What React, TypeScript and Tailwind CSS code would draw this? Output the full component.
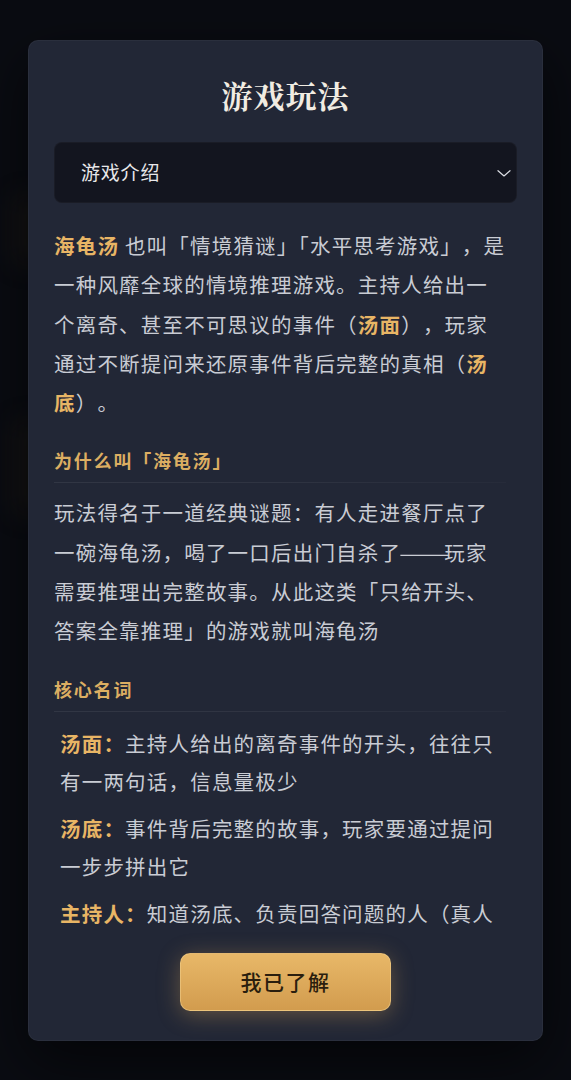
import React from 'react';

const sans = { fontFamily: '"Noto Sans CJK SC", "Noto Sans", sans-serif' };
const serif = { fontFamily: '"Noto Serif CJK SC", "Source Han Serif SC", "Noto Sans CJK SC", serif' };

interface Term {
  label: string;
  text: string;
}

const terms: Term[] = [
  { label: '汤面：', text: '主持人给出的离奇事件的开头，往往只有一两句话，信息量极少' },
  { label: '汤底：', text: '事件背后完整的故事，玩家要通过提问一步步拼出它' },
  { label: '主持人：', text: '知道汤底、负责回答问题的人（真人或 AI），只能回答“是”“不是”或“无关”' },
];

const Gold = ({ children }: { children: React.ReactNode }) => (
  <b className="font-bold text-[#e8b565]">{children}</b>
);

// adjacent brackets get collapsed like the reference does
const Pair = ({ children }: { children: React.ReactNode }) => (
  <span className="[text-spacing-trim:normal]">{children}</span>
);

const Section = ({ title, children }: { title: string; children: React.ReactNode }) => (
  <div className="mt-[24px]">
    <h3 className="text-[18px] leading-[28px] font-bold tracking-[1.8px] text-[#dcae62]">{title}</h3>
    <div className="mt-[8px] h-px w-full bg-gradient-to-r from-white/[0.07] via-white/[0.06] to-white/[0.02]" />
    {children}
  </div>
);

export default function App() {
  return (
    <div className="relative min-h-[1080px] w-full overflow-hidden bg-[#0a0c12]" style={sans}>
      {/* faint page content behind the dialog */}
      <div className="absolute left-[12px] top-[195px] h-[70px] w-[36px] rounded-lg bg-[#3a2e18]/20 blur-md" />
      <div className="absolute left-[12px] top-[420px] h-[95px] w-[36px] rounded-lg bg-[#3a2e18]/20 blur-md" />

      <div className="relative px-[28px] pt-[40px]">
        <div className="flex h-[1001px] flex-col rounded-[10px] border border-white/[0.04] bg-[#222736] px-[25px] pt-[30px] shadow-[0_20px_60px_rgba(0,0,0,0.6)]">
          <h2 className="text-center text-[31px] font-bold leading-[48px] tracking-[1px] text-[#f1ece2]" style={serif}>
            游戏玩法
          </h2>

          <div className="mt-[23px] flex h-[61px] items-center justify-between rounded-[8px] border border-white/[0.03] bg-[#13151f] pl-[26px] pr-[3px]">
            <span className="text-[19px] tracking-[0.8px] text-[#e8e8ea]">游戏介绍</span>
            <svg width="18" height="18" viewBox="0 0 24 24" fill="none" stroke="#dcdee4" strokeWidth="1.6" strokeLinecap="round" strokeLinejoin="round">
              <path d="M4 9l8 7 8-7" />
            </svg>
          </div>

          <div className="mt-[23px] h-[710px] overflow-hidden pr-[11px] text-[20.5px] leading-[39.3px] tracking-[1.2px] text-[#c9ccd4] [text-spacing-trim:space-all]">
            <p>
              <Gold>海龟汤</Gold> 也叫「情境猜谜<Pair>」「</Pair>水平思考游戏」，是一种风靡全球的情境推理游戏。主持人给出一个离奇、甚至不可思议的事件（<Gold>汤面</Gold>），玩家通过不断提问来还原事件背后完整的真相（<Gold>汤底</Gold>）。
            </p>

            <Section title="为什么叫「海龟汤」">
              <p className="mt-[10px]">
                玩法得名于一道经典谜题：有人走进餐厅点了一碗海龟汤，喝了一口后出门自杀了
                <span className="inline-block w-[43px] text-center">
                  <span className="inline-block scale-x-[1.5] tracking-[-2px]">——</span>
                </span>
                玩家需要推理出完整故事。从此这类「只给开头、答案全靠推理」的游戏就叫海龟汤
              </p>
            </Section>

            <Section title="核心名词">
              <ul className="mt-[12px] flex flex-col gap-[9px] pl-[6px] leading-[38px]">
                {terms.map((t) => (
                  <li key={t.label}>
                    <Gold>{t.label}</Gold>
                    {t.text}
                  </li>
                ))}
              </ul>
            </Section>
          </div>

          <div className="mt-[17px] flex justify-center">
            <button className="h-[58px] w-[211px] rounded-[10px] border border-[#f0cd88]/60 bg-gradient-to-b from-[#e8b868] to-[#d29c4e] text-[21px] font-medium tracking-[1.5px] text-[#2a1e0e] shadow-[0_4px_22px_rgba(224,170,90,0.35)]">
              我已了解
            </button>
          </div>
        </div>
      </div>
    </div>
  );
}
